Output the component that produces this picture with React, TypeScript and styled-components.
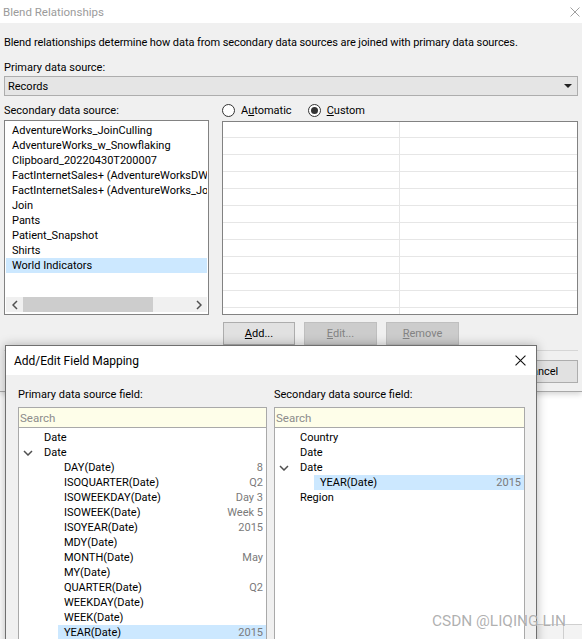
import React from "react";
import styled, { createGlobalStyle } from "styled-components";

const GlobalStyle = createGlobalStyle`
  html, body {
    margin: 0;
    padding: 0;
    background: #ffffff;
  }
  body {
    font-family: Roboto, "Liberation Sans", sans-serif;
    font-size: 11px;
    color: #000000;
    overflow: hidden;
  }
  * {
    box-sizing: border-box;
  }
`;

const Screen = styled.div`
  position: relative;
  width: 582px;
  height: 639px;
  overflow: hidden;
  background: #ffffff;
`;

/* ---------- main window ---------- */

const MainWindow = styled.div`
  width: 582px;
  height: 392px;
  background: #f0f0f0;
  border-bottom: 1px solid #a8a8a8;
  box-shadow: 0 2px 6px rgba(0, 0, 0, 0.18);
`;

const TitleBar = styled.div<{ $height: number; $inactive?: boolean }>`
  height: ${(p) => p.$height}px;
  background: #ffffff;
  display: flex;
  align-items: center;
  justify-content: space-between;
  color: ${(p) => (p.$inactive ? "#9b9b9b" : "#000000")};
  font-size: ${(p) => (p.$inactive ? "11.5px" : "12px")};
`;

const TitleText = styled.span<{ $left: number }>`
  padding-left: ${(p) => p.$left}px;
`;

const CloseButton = styled.span<{ $right: number }>`
  display: flex;
  align-items: center;
  padding-right: ${(p) => p.$right}px;
`;

const Body = styled.div`
  padding: 0 4px;
`;

const Description = styled.div`
  margin-top: 12px;
  line-height: 15px;
  white-space: nowrap;
  letter-spacing: -0.08px;
`;

const Label = styled.div<{ $top?: number }>`
  margin-top: ${(p) => p.$top ?? 0}px;
  line-height: 15px;
  white-space: nowrap;
`;

const Combo = styled.div`
  margin-top: 1px;
  height: 20px;
  border: 1px solid #adadad;
  background: #e5e5e5;
  display: flex;
  align-items: center;
  justify-content: space-between;
  padding: 0 5px 0 3px;
`;

const ComboArrow = styled.span`
  width: 0;
  height: 0;
  border-left: 4px solid transparent;
  border-right: 4px solid transparent;
  border-top: 4px solid #222222;
`;

const Columns = styled.div`
  margin-top: 7px;
  display: grid;
  grid-template-columns: 205px 1fr;
  column-gap: 13px;
`;

const Column = styled.div`
  display: flex;
  flex-direction: column;
`;

const ListBox = styled.div`
  margin-top: 2px;
  height: 195px;
  border: 1px solid #828282;
  background: #ffffff;
  padding: 2px 1px 2px 1px;
  display: flex;
  flex-direction: column;
`;

const ListItems = styled.div`
  flex: 1;
  overflow: hidden;
`;

const ListItem = styled.div<{ $selected?: boolean }>`
  height: 15px;
  line-height: 15px;
  padding-left: 6px;
  white-space: nowrap;
  overflow: hidden;
  background: ${(p) => (p.$selected ? "#cce8ff" : "transparent")};
`;

const HScroll = styled.div`
  height: 15px;
  background: #f0f0f0;
  display: flex;
  align-items: center;
`;

const ScrollArrow = styled.span`
  width: 17px;
  height: 15px;
  display: flex;
  align-items: center;
  justify-content: center;
`;

const ScrollTrack = styled.div`
  flex: 1;
  height: 15px;
  display: flex;
  align-items: center;
`;

const ScrollThumb = styled.div<{ $width: number }>`
  width: ${(p) => p.$width}px;
  height: 15px;
  background: #cdcdcd;
`;

const RadioRow = styled.div`
  height: 15px;
  display: flex;
  align-items: center;
  gap: 16px;
`;

const RadioOption = styled.label`
  display: flex;
  align-items: center;
  gap: 6px;
  line-height: 15px;
`;

const RadioCircle = styled.span<{ $checked?: boolean }>`
  width: 13px;
  height: 13px;
  border-radius: 50%;
  border: 1px solid #333333;
  background: #ffffff;
  display: flex;
  align-items: center;
  justify-content: center;

  &::after {
    content: "";
    width: 7px;
    height: 7px;
    border-radius: 50%;
    background: ${(p) => (p.$checked ? "#333333" : "transparent")};
  }
`;

const MapGrid = styled.div`
  margin-top: 3px;
  height: 194px;
  border: 1px solid #828282;
  background: #ffffff;
  overflow: hidden;
`;

const GridRow = styled.div`
  height: 17px;
  display: grid;
  grid-template-columns: 176px 1fr;
  border-bottom: 1px solid #e6e6e6;

  &:first-child {
    height: 16px;
  }
`;

const GridCell = styled.div`
  & + & {
    border-left: 1px solid #e6e6e6;
  }
`;

const ButtonRow = styled.div`
  margin-top: 7px;
  padding-left: 1px;
  display: flex;
  gap: 9px;
`;

const Button = styled.button<{ $disabled?: boolean; $width?: number }>`
  width: ${(p) => p.$width ?? 73}px;
  height: 23px;
  padding: 0;
  font-family: Roboto, "Liberation Sans", sans-serif;
  font-size: 11px;
  border: 1px solid ${(p) => (p.$disabled ? "#bfbfbf" : "#adadad")};
  background: ${(p) => (p.$disabled ? "#cccccc" : "#e1e1e1")};
  color: ${(p) => (p.$disabled ? "#838383" : "#000000")};

  u {
    text-decoration: underline;
  }
`;

const Separator = styled.div`
  margin-top: 5px;
  height: 1px;
  background: #d6d6d6;
`;

const FooterRow = styled.div`
  margin-top: 9px;
  display: flex;
  justify-content: flex-end;
  gap: 9px;
`;

/* ---------- dialog ---------- */

const Dialog = styled.div`
  position: absolute;
  left: 5px;
  top: 345px;
  width: 532px;
  height: 310px;
  background: #f0f0f0;
  border: 1px solid #6f6f6f;
  box-shadow: 0 0 10px rgba(0, 0, 0, 0.28);
`;

const DialogBody = styled.div`
  padding: 12px 0 0 12px;
  display: grid;
  grid-template-columns: 249px 251px;
  column-gap: 7px;
`;

const SearchBox = styled.div`
  margin-top: 5px;
  height: 21px;
  border: 1px solid #a9a9a9;
  background: #fefee9;
  color: #8c8c8c;
  font-size: 11.5px;
  line-height: 20px;
  padding-left: 1px;
`;

const TreeBox = styled.div`
  height: 230px;
  border: 1px solid #a9a9a9;
  border-top: none;
  background: #ffffff;
  padding-top: 2px;
  overflow: hidden;
`;

const TreeRow = styled.div<{ $level: number; $selected?: boolean }>`
  height: 15px;
  line-height: 15px;
  margin-left: ${(p) => p.$level * 39}px;
  display: flex;
  align-items: center;
  white-space: nowrap;
  background: ${(p) => (p.$selected ? "#cce8ff" : "transparent")};
`;

const Toggle = styled.span<{ $level: number }>`
  width: ${(p) => (p.$level === 0 ? 25 : 6)}px;
  flex: none;
  display: flex;
  align-items: center;
  padding-left: 4px;
  height: 15px;
`;

const TreeLabel = styled.span`
  flex: 1;
`;

const TreeValue = styled.span`
  color: #7a7a7a;
  padding-right: 3px;
`;

/* ---------- backdrop bits ---------- */

const BackStrip = styled.div`
  position: absolute;
  left: 537px;
  top: 624px;
  width: 45px;
  height: 15px;
  background: #f3f3f3;
  border-top: 1px solid #cfcfcf;
  display: grid;
  grid-template-columns: 26px 1fr;
`;

const BackCell = styled.div`
  & + & {
    border-left: 1px solid #cfcfcf;
  }
`;

const Watermark = styled.div`
  position: absolute;
  left: 432px;
  top: 611px;
  font-family: Roboto, "Liberation Sans", sans-serif;
  font-size: 15.4px;
  line-height: 20px;
  color: rgba(150, 150, 150, 0.75);
  text-shadow: 0 0 1px rgba(255, 255, 255, 0.9);
  white-space: nowrap;
`;

/* ---------- icons ---------- */

const CloseIcon = ({ color, size }: { color: string; size: number }) => (
  <svg width={size} height={size} viewBox="0 0 10 10">
    <path d="M0.5 0.5 L9.5 9.5 M9.5 0.5 L0.5 9.5" stroke={color} strokeWidth="1" fill="none" />
  </svg>
);

const Chevron = ({ dir }: { dir: "down" | "left" | "right" }) => {
  const d =
    dir === "down"
      ? "M1 1 L5 5 L9 1"
      : dir === "left"
      ? "M5 1 L1 5 L5 9"
      : "M1 1 L5 5 L1 9";
  const w = dir === "down" ? 10 : 6;
  const h = dir === "down" ? 6 : 10;
  return (
    <svg width={w} height={h} viewBox={`0 0 ${w} ${h}`}>
      <path d={d} stroke="#505050" strokeWidth="1.5" fill="none" />
    </svg>
  );
};

/* ---------- data ---------- */

const secondarySources = [
  "AdventureWorks_JoinCulling",
  "AdventureWorks_w_Snowflaking",
  "Clipboard_20220430T200007",
  "FactInternetSales+ (AdventureWorksDW2019)",
  "FactInternetSales+ (AdventureWorks_JoinCulling)",
  "Join",
  "Pants",
  "Patient_Snapshot",
  "Shirts",
  "World Indicators",
];

type Field = {
  label: string;
  level: number;
  expanded?: boolean;
  value?: string;
  selected?: boolean;
};

const primaryFields: Field[] = [
  { label: "Date", level: 0 },
  { label: "Date", level: 0, expanded: true },
  { label: "DAY(Date)", level: 1, value: "8" },
  { label: "ISOQUARTER(Date)", level: 1, value: "Q2" },
  { label: "ISOWEEKDAY(Date)", level: 1, value: "Day 3" },
  { label: "ISOWEEK(Date)", level: 1, value: "Week 5" },
  { label: "ISOYEAR(Date)", level: 1, value: "2015" },
  { label: "MDY(Date)", level: 1 },
  { label: "MONTH(Date)", level: 1, value: "May" },
  { label: "MY(Date)", level: 1 },
  { label: "QUARTER(Date)", level: 1, value: "Q2" },
  { label: "WEEKDAY(Date)", level: 1 },
  { label: "WEEK(Date)", level: 1 },
  { label: "YEAR(Date)", level: 1, value: "2015", selected: true },
];

const secondaryFields: Field[] = [
  { label: "Country", level: 0 },
  { label: "Date", level: 0 },
  { label: "Date", level: 0, expanded: true },
  { label: "YEAR(Date)", level: 1, value: "2015", selected: true },
  { label: "Region", level: 0 },
];

const FieldTree = ({ fields }: { fields: Field[] }) => (
  <TreeBox>
    {fields.map((f, i) => (
      <TreeRow key={i} $level={f.level} $selected={f.selected}>
        <Toggle $level={f.level}>{f.expanded && <Chevron dir="down" />}</Toggle>
        <TreeLabel>{f.label}</TreeLabel>
        {f.value && <TreeValue>{f.value}</TreeValue>}
      </TreeRow>
    ))}
  </TreeBox>
);

const App = () => {
  return (
    <Screen>
      <GlobalStyle />
      <MainWindow>
        <TitleBar $height={23} $inactive>
          <TitleText $left={3}>Blend Relationships</TitleText>
          <CloseButton $right={2}>
            <CloseIcon color="#a0a0a0" size={10} />
          </CloseButton>
        </TitleBar>
        <Body>
          <Description>
            Blend relationships determine how data from secondary data sources are joined with
            primary data sources.
          </Description>
          <Label $top={10}>Primary data source:</Label>
          <Combo>
            <span>Records</span>
            <ComboArrow />
          </Combo>
          <Columns>
            <Column>
              <Label>Secondary data source:</Label>
              <ListBox>
                <ListItems>
                  {secondarySources.map((s) => (
                    <ListItem key={s} $selected={s === "World Indicators"}>
                      {s}
                    </ListItem>
                  ))}
                </ListItems>
                <HScroll>
                  <ScrollArrow>
                    <Chevron dir="left" />
                  </ScrollArrow>
                  <ScrollTrack>
                    <ScrollThumb $width={130} />
                  </ScrollTrack>
                  <ScrollArrow>
                    <Chevron dir="right" />
                  </ScrollArrow>
                </HScroll>
              </ListBox>
            </Column>
            <Column>
              <RadioRow>
                <RadioOption>
                  <RadioCircle />
                  <span>
                    A<u>u</u>tomatic
                  </span>
                </RadioOption>
                <RadioOption>
                  <RadioCircle $checked />
                  <span>
                    <u>C</u>ustom
                  </span>
                </RadioOption>
              </RadioRow>
              <MapGrid>
                {Array.from({ length: 12 }).map((_, i) => (
                  <GridRow key={i}>
                    <GridCell />
                    <GridCell />
                  </GridRow>
                ))}
              </MapGrid>
              <ButtonRow>
                <Button $width={72}>
                  <u>A</u>dd...
                </Button>
                <Button $disabled>
                  <u>E</u>dit...
                </Button>
                <Button $disabled>
                  <u>R</u>emove
                </Button>
              </ButtonRow>
            </Column>
          </Columns>
          <Separator />
          <FooterRow>
            <Button>OK</Button>
            <Button>Cancel</Button>
          </FooterRow>
        </Body>
      </MainWindow>

      <BackStrip>
        <BackCell />
        <BackCell />
      </BackStrip>

      <Dialog>
        <TitleBar $height={29}>
          <TitleText $left={8}>Add/Edit Field Mapping</TitleText>
          <CloseButton $right={10}>
            <CloseIcon color="#111111" size={11} />
          </CloseButton>
        </TitleBar>
        <DialogBody>
          <Column>
            <Label>Primary data source field:</Label>
            <SearchBox>Search</SearchBox>
            <FieldTree fields={primaryFields} />
          </Column>
          <Column>
            <Label>Secondary data source field:</Label>
            <SearchBox>Search</SearchBox>
            <FieldTree fields={secondaryFields} />
          </Column>
        </DialogBody>
      </Dialog>

      <Watermark>CSDN @LIQING LIN</Watermark>
    </Screen>
  );
};

export default App;
